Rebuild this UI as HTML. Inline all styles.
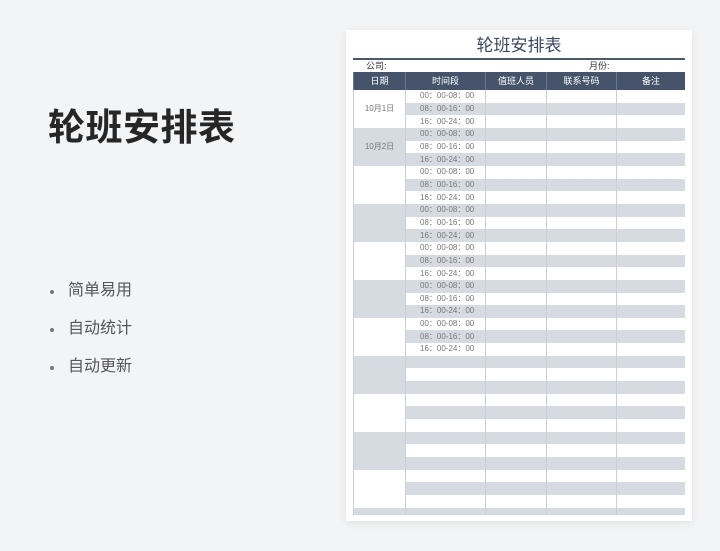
<!DOCTYPE html>
<html><head><meta charset="utf-8">
<style>
*{margin:0;padding:0;box-sizing:border-box}
body{width:720px;height:551px;background:#f3f4f6;font-family:"Liberation Sans","Noto Sans CJK SC",sans-serif;position:relative;overflow:hidden}
.h1{position:absolute;left:48px;top:106px;font-size:37px;font-weight:bold;color:#262626;letter-spacing:0.5px;line-height:44px}
.b{position:absolute;left:68px;font-size:16px;color:#555;line-height:20px}
.b:before{content:"";position:absolute;left-18px;top:9px;width:4px;height:4px;border-radius:2px;background:#777;left:-18px}
.card{position:absolute;left:346px;top:30px;width:346px;height:491px;background:#fff;box-shadow:0 2px 8px rgba(0,0,0,0.08)}
.t{position:absolute;left:0;width:346px;top:5px;text-align:center;font-size:17px;color:#3b4a5e;line-height:22px}
.line{position:absolute;left:7px;width:332px;top:28px;height:2px;background:#4a586c}
.co{position:absolute;top:30px;font-size:9px;color:#333;line-height:12px}
.wrap{position:absolute;left:7px;top:42px;width:332px;height:443px;overflow:hidden}
table{border-collapse:collapse;table-layout:fixed;width:332px}
td,th{border-left:1px solid #c9cfd7;border-right:1px solid #c9cfd7;height:12.67px;padding:0;font-size:8px;line-height:12px;text-align:center;color:#777;font-weight:normal;white-space:nowrap;overflow:hidden}
th{height:18px;background:#45546a;color:#fff;font-size:9px;border-color:#6b7789}
tr.g td.x{background:#d5dbe1}
td.dg{background:#d5dbe1}
td.dw{background:#fff}
td.tm{text-align:left;padding-left:14px}
</style></head><body>
<div class="h1">轮班安排表</div>
<div class="b" style="top:281px">简单易用</div>
<div class="b" style="top:319px">自动统计</div>
<div class="b" style="top:357px">自动更新</div>
<div class="card">
<div class="t">轮班安排表</div>
<div class="line"></div>
<div class="co" style="left:20px">公司:</div>
<div class="co" style="left:243px">月份:</div>
<div class="wrap">
<table>
<colgroup><col style="width:52px"><col style="width:80px"><col style="width:61px"><col style="width:70px"><col style="width:69px"></colgroup>
<tr><th>日期</th><th>时间段</th><th>值班人员</th><th>联系号码</th><th>备注</th></tr>
<tr><td rowspan="3" class="dw">10月1日</td><td class="x tm">00：00-08：00</td><td class="x"></td><td class="x"></td><td class="x"></td></tr>
<tr class="g"><td class="x tm">08：00-16：00</td><td class="x"></td><td class="x"></td><td class="x"></td></tr>
<tr><td class="x tm">16：00-24：00</td><td class="x"></td><td class="x"></td><td class="x"></td></tr>
<tr class="g"><td rowspan="3" class="dg">10月2日</td><td class="x tm">00：00-08：00</td><td class="x"></td><td class="x"></td><td class="x"></td></tr>
<tr><td class="x tm">08：00-16：00</td><td class="x"></td><td class="x"></td><td class="x"></td></tr>
<tr class="g"><td class="x tm">16：00-24：00</td><td class="x"></td><td class="x"></td><td class="x"></td></tr>
<tr><td rowspan="3" class="dw"></td><td class="x tm">00：00-08：00</td><td class="x"></td><td class="x"></td><td class="x"></td></tr>
<tr class="g"><td class="x tm">08：00-16：00</td><td class="x"></td><td class="x"></td><td class="x"></td></tr>
<tr><td class="x tm">16：00-24：00</td><td class="x"></td><td class="x"></td><td class="x"></td></tr>
<tr class="g"><td rowspan="3" class="dg"></td><td class="x tm">00：00-08：00</td><td class="x"></td><td class="x"></td><td class="x"></td></tr>
<tr><td class="x tm">08：00-16：00</td><td class="x"></td><td class="x"></td><td class="x"></td></tr>
<tr class="g"><td class="x tm">16：00-24：00</td><td class="x"></td><td class="x"></td><td class="x"></td></tr>
<tr><td rowspan="3" class="dw"></td><td class="x tm">00：00-08：00</td><td class="x"></td><td class="x"></td><td class="x"></td></tr>
<tr class="g"><td class="x tm">08：00-16：00</td><td class="x"></td><td class="x"></td><td class="x"></td></tr>
<tr><td class="x tm">16：00-24：00</td><td class="x"></td><td class="x"></td><td class="x"></td></tr>
<tr class="g"><td rowspan="3" class="dg"></td><td class="x tm">00：00-08：00</td><td class="x"></td><td class="x"></td><td class="x"></td></tr>
<tr><td class="x tm">08：00-16：00</td><td class="x"></td><td class="x"></td><td class="x"></td></tr>
<tr class="g"><td class="x tm">16：00-24：00</td><td class="x"></td><td class="x"></td><td class="x"></td></tr>
<tr><td rowspan="3" class="dw"></td><td class="x tm">00：00-08：00</td><td class="x"></td><td class="x"></td><td class="x"></td></tr>
<tr class="g"><td class="x tm">08：00-16：00</td><td class="x"></td><td class="x"></td><td class="x"></td></tr>
<tr><td class="x tm">16：00-24：00</td><td class="x"></td><td class="x"></td><td class="x"></td></tr>
<tr class="g"><td rowspan="3" class="dg"></td><td class="x"></td><td class="x"></td><td class="x"></td><td class="x"></td></tr>
<tr><td class="x"></td><td class="x"></td><td class="x"></td><td class="x"></td></tr>
<tr class="g"><td class="x"></td><td class="x"></td><td class="x"></td><td class="x"></td></tr>
<tr><td rowspan="3" class="dw"></td><td class="x"></td><td class="x"></td><td class="x"></td><td class="x"></td></tr>
<tr class="g"><td class="x"></td><td class="x"></td><td class="x"></td><td class="x"></td></tr>
<tr><td class="x"></td><td class="x"></td><td class="x"></td><td class="x"></td></tr>
<tr class="g"><td rowspan="3" class="dg"></td><td class="x"></td><td class="x"></td><td class="x"></td><td class="x"></td></tr>
<tr><td class="x"></td><td class="x"></td><td class="x"></td><td class="x"></td></tr>
<tr class="g"><td class="x"></td><td class="x"></td><td class="x"></td><td class="x"></td></tr>
<tr><td rowspan="3" class="dw"></td><td class="x"></td><td class="x"></td><td class="x"></td><td class="x"></td></tr>
<tr class="g"><td class="x"></td><td class="x"></td><td class="x"></td><td class="x"></td></tr>
<tr><td class="x"></td><td class="x"></td><td class="x"></td><td class="x"></td></tr>
<tr class="g"><td rowspan="3" class="dg"></td><td class="x"></td><td class="x"></td><td class="x"></td><td class="x"></td></tr>
<tr><td class="x"></td><td class="x"></td><td class="x"></td><td class="x"></td></tr>
</table>
</div>
</div>
</body></html>
